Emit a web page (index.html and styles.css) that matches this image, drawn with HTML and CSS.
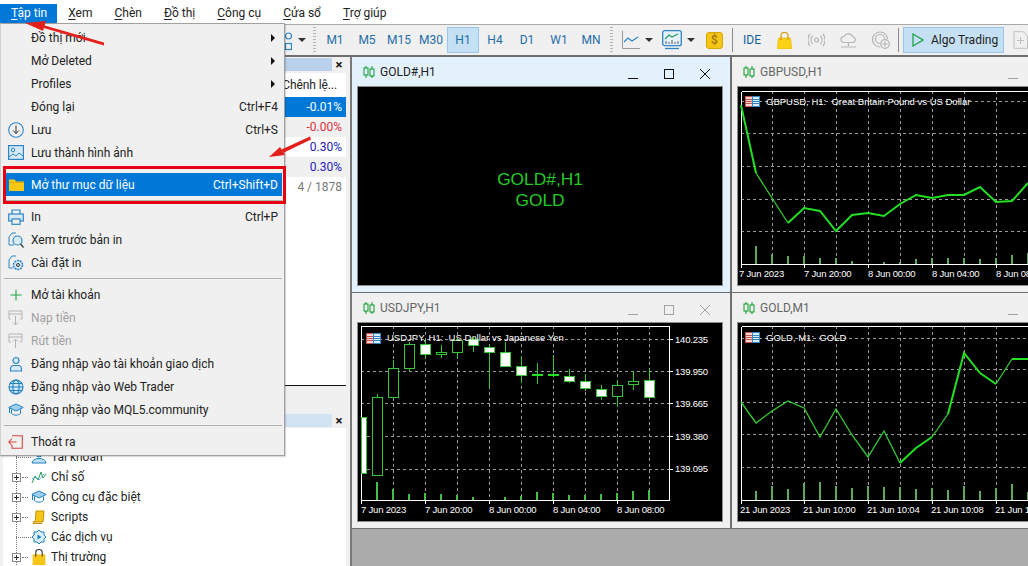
FILE: index.html
```html
<!DOCTYPE html>
<html lang="vi">
<head>
<meta charset="utf-8">
<title>MetaTrader 5</title>
<link rel="stylesheet" href="styles.css">
</head>
<body>
<svg class="defs" width="0" height="0" aria-hidden="true">
  <symbol id="candles" viewBox="0 0 12 12"><path d="M3 0v2M3 9v3M9 0v3M9 10v2" fill="none" stroke="#0a9a2a"/><rect x="1" y="2" width="4" height="7" fill="none" stroke="#0a9a2a"/><rect x="7" y="3" width="4" height="7" fill="none" stroke="#0a9a2a"/></symbol>
  <symbol id="flag" viewBox="0 0 15 11"><rect x=".5" y=".5" width="7" height="10" fill="#f7d9d6" stroke="#c9504a"/><rect x="7.5" y=".5" width="7" height="10" fill="#dcecf8" stroke="#2f85c4"/><path d="M1 3.500h6M1 5.500h6M1 7.500h6" stroke="#c9504a"/><path d="M8 3.500h6M8 5.500h6M8 7.500h6" stroke="#2f85c4"/></symbol>
  <symbol id="cap" viewBox="0 0 16 14"><path d="M.8 4.500 8 1l7.200 3.500L8 8z" fill="#9fd0ef" stroke="#1f7fbf"/><path d="M3.500 6.500v4c2.500 2.200 6.500 2.200 9 0v-4" fill="none" stroke="#1f7fbf"/><path d="M1.500 5v5" stroke="#1f7fbf"/></symbol>
</svg>
<div class="app">
  <nav class="menubar">
    <span class="mi mi-on"><u>T</u>ập tin</span>
    <span class="mi"><u>X</u>em</span>
    <span class="mi"><u>C</u>hèn</span>
    <span class="mi"><u>Đ</u>ồ thị</span>
    <span class="mi"><u>C</u>ông cụ</span>
    <span class="mi"><u>C</u>ửa sổ</span>
    <span class="mi"><u>T</u>rợ giúp</span>
  </nav>

  <div class="toolbar">
    <div class="tb-covered"></div>
    <svg class="tb-ico" width="11" height="24" viewBox="0 0 11 24"><circle cx="7.500" cy="8" r="3" fill="none" stroke="#2f85c4" stroke-width="1.200"/><rect x="4.500" y="15.500" width="6" height="6" fill="none" stroke="#2f85c4" stroke-width="1.200"/></svg>
    <span class="caret caret-shapes"></span>
    <span class="grip"></span>
    <span class="tf">M1</span><span class="tf">M5</span><span class="tf">M15</span><span class="tf">M30</span><span class="tf tf-on">H1</span><span class="tf">H4</span><span class="tf">D1</span><span class="tf">W1</span><span class="tf">MN</span>
    <span class="grip grip-b"></span>
    <svg class="tb-ico" width="18" height="18" viewBox="0 0 18 18"><path d="M.5 0v17.500H18" fill="none" stroke="#999"/><path d="M2 11l4-4 4 3 6-4" fill="none" stroke="#2f85c4" stroke-width="1.200"/></svg>
    <span class="caret"></span>
    <svg class="tb-ico tb-chart" width="20" height="20" viewBox="0 0 20 20"><rect x=".7" y=".7" width="18.600" height="15" rx="2" fill="#e6f2fb" stroke="#2f85c4" stroke-width="1.300"/><path d="M3 9l4-4 3 2 6-3" fill="none" stroke="#2a9d55" stroke-width="1.200"/><path d="M4 14v-3M7 14v-2M10 14v-4M13 14v-2M16 14v-3" stroke="#555"/><path d="M3 18.500h14" stroke="#2f85c4" stroke-width="1.300"/></svg>
    <span class="caret"></span>
    <span class="dollar">$</span>
    <span class="sep"></span>
    <span class="ide">IDE</span>
    <svg class="tb-ico tb-bag" width="15" height="17" viewBox="0 0 15 17"><path d="M1.500 6h12L15 17H0z" fill="#fcd116" stroke="#e5b300" stroke-width=".6"/><path d="M4 8V3.500C4 1.200 5.500.5 7.500.5S11 1.200 11 3.500V8" fill="none" stroke="#cf9c00" stroke-width="1.200"/></svg>
    <svg class="tb-ico tb-signal" width="17" height="14" viewBox="0 0 17 14"><g fill="none" stroke="#b5b5b5" stroke-width="1.200"><circle cx="8.500" cy="7" r="2"/><path d="M4.500 3a6 6 0 0 0 0 8M12.500 3a6 6 0 0 1 0 8M2 1a9.500 9.500 0 0 0 0 12M15 1a9.500 9.500 0 0 1 0 12"/></g></svg>
    <svg class="tb-ico tb-cloud" width="17" height="16" viewBox="0 0 17 16"><g fill="none" stroke="#b5b5b5" stroke-width="1.200"><path d="M4 10.500a3 3 0 0 1 0-6 5 5 0 0 1 9 .5 2.800 2.800 0 0 1 0 5.500z"/><path d="M8.500 10.500V14M1 15h15"/></g></svg>
    <svg class="tb-ico tb-globe" width="18" height="18" viewBox="0 0 18 18"><g fill="none" stroke="#b5b5b5" stroke-width="1.200"><path d="M8 16a7.500 7.500 0 1 1 7.500-8"/><path d="M8 12.500a4.500 4.500 0 1 1 4.500-5"/><circle cx="13" cy="13" r="4.300"/><path d="M13 10.500v5M10.500 13h5"/></g></svg>
    <span class="sep sep-algo"></span>
    <span class="algo"><svg width="12" height="14" viewBox="0 0 12 14"><path d="M1 1l10 6-10 6z" fill="none" stroke="#1fa34a" stroke-width="1.300"/></svg>Algo Trading</span>
    <svg class="tb-ico tb-new" width="15" height="18" viewBox="0 0 15 18"><path d="M1 .7h9l4.500 4V17.300H1z" fill="none" stroke="#c0c0c0"/><path d="M7.500 6v7M4 9.500h7" stroke="#c0c0c0"/></svg>
  </div>

  <div class="main">
    <aside class="side">
      <section class="watch">
        <header class="panel-head"><span class="panel-bar"></span><span class="panel-x">×</span></header>
        <div class="rows">
          <div class="row row-head">Chênh lệ...</div>
          <div class="row row-sel">-0.01%</div>
          <div class="row row-alt row-red">-0.00%</div>
          <div class="row row-blue">0.30%</div>
          <div class="row row-alt row-blue">0.30%</div>
          <div class="row row-count">4 / 1878</div>
        </div>
      </section>
      <section class="nav">
        <header class="panel-head"><span class="panel-bar panel-bar-light"></span><span class="panel-x">×</span></header>
        <ul class="tree">
          <li class="node"><span class="link"></span><svg class="node-ico" width="16" height="14" viewBox="0 0 16 14"><circle cx="8" cy="4" r="3" fill="#bfe0f5" stroke="#1f7fbf"/><path d="M1 13c0-6 14-6 14 0z" fill="#bfe0f5" stroke="#1f7fbf"/></svg><span>Tài khoản</span></li>
          <li class="node"><span class="exp"></span><span class="link link-s"></span><svg class="node-ico" width="16" height="14" viewBox="0 0 16 14"><path d="M1 13l3-7 3 4 3-8 2 6 3-4" fill="none" stroke="#2a9d55"/><path d="M1 9l4-2 3 3 6-7" fill="none" stroke="#4aa3dd" stroke-dasharray="2 1"/></svg><span>Chỉ số</span></li>
          <li class="node"><span class="exp"></span><span class="link link-s"></span><svg class="node-ico" width="16" height="14"><use href="#cap"/></svg><span>Công cụ đặc biệt</span></li>
          <li class="node"><span class="exp"></span><span class="link link-s"></span><svg class="node-ico" width="16" height="14" viewBox="0 0 16 14"><path d="M5 1h8l-1 11H2c1.500 0 2.500-1 2.500-3z" fill="#f5c518" stroke="#c48f00"/><path d="M2 13.500h9" stroke="#c48f00"/></svg><span>Scripts</span></li>
          <li class="node"><span class="link"></span><svg class="node-ico" width="16" height="16" viewBox="0 0 16 16"><path d="M8 1l2 2h3v3l2 2-2 2v3h-3l-2 2-2-2H3v-3L1 8l2-2V3h3z" fill="#d9edf9" stroke="#1f7fbf"/><path d="M6.500 5.500l4 2.500-4 2.500z" fill="#1f7fbf"/></svg><span>Các dịch vụ</span></li>
          <li class="node"><span class="exp"></span><span class="link link-s"></span><svg class="node-ico" width="16" height="16" viewBox="0 0 14 15"><path d="M1 5h12v10H1z" fill="#f5c518"/><path d="M4 7V3C4 1 5.500.5 7 .5S10 1 10 3v4" fill="none" stroke="#333"/></svg><span>Thị trường</span></li>
        </ul>
      </section>
    </aside>

    <section class="mdi">
      <article class="win win-active">
        <header class="win-title"><svg class="win-ico" width="12" height="12"><use href="#candles"/></svg><span class="win-name">GOLD#,H1</span>
          <span class="win-btns"><span class="btn btn-min"></span><span class="btn btn-max"></span><span class="btn btn-close"></span></span></header>
        <div class="chart chart-empty"><span>GOLD#,H1</span><span>GOLD</span></div>
      </article>

      <article class="win">
        <header class="win-title"><svg class="win-ico" width="12" height="12"><use href="#candles"/></svg><span class="win-name">GBPUSD,H1</span>
          <span class="win-btns"><span class="btn btn-min"></span><span class="btn btn-max"></span><span class="btn btn-close"></span></span></header>
        <div class="chart">
          <svg class="plot" width="364" height="198" viewBox="738 87 364 198">
            <g class="grid"><path d="M772.500 91V264M804.500 91V264M836.500 91V264M868.500 91V264M900.500 91V264M932.500 91V264M964.500 91V264M996.500 91V264M1028 91V264M741 101.500H1102M741 133.500H1102M741 166.500H1102M741 199.500H1102M741 231.500H1102"/></g>
            <path class="frame" d="M741.500 91.500H1102M741.500 91.500V264.500H1102M741.500 264V268M804.500 264V268M868.500 264V268M932.500 264V268M996.500 264V268"/>
            <path class="vol" d="M756 264V246M772 264V254M788 264V256M804 264V256M820 264V258M836 264V258M852 264V261M884 264V262M900 264V262M916 264V259M932 264V258M948 264V258M964 264V258M980 264V259M996 264V258M1012 264V255M1028 264V253"/>
            <polyline class="line" points="741,105 756,173"/>
            <polyline class="line line-thin" points="756,173 772,198 788,223"/>
            <polyline class="line" points="788,223 804,208 820,211 836,231 852,215 868,213 884,216 900,204 916,195 932,198 948,195 964,195 980,187 996,202 1012,201 1028,183"/>
            <use href="#flag" x="745" y="96" width="15" height="11"/>
            <text class="label label-legend" x="766" y="105">GBPUSD, H1:  Great Britain Pound vs US Dollar</text>
            <text class="label" x="739" y="277">7 Jun 2023</text><text class="label" x="804" y="277">7 Jun 20:00</text><text class="label" x="868" y="277">8 Jun 00:00</text><text class="label" x="932" y="277">8 Jun 04:00</text><text class="label" x="996" y="277">8 Jun 08:00</text>
          </svg>
        </div>
      </article>

      <article class="win">
        <header class="win-title"><svg class="win-ico" width="12" height="12"><use href="#candles"/></svg><span class="win-name">USDJPY,H1</span>
          <span class="win-btns"><span class="btn btn-min"></span><span class="btn btn-max"></span><span class="btn btn-close"></span></span></header>
        <div class="chart">
          <svg class="plot" width="364" height="198" viewBox="358 323 364 198">
            <g class="grid"><path d="M393.500 326V500M425.500 326V500M457.500 326V500M489.500 326V500M521.500 326V500M553.500 326V500M585.500 326V500M617.500 326V500M649.500 326V500M361 339.500H669M361 371.500H669M361 403.500H669M361 436.500H669M361 469.500H669"/></g>
            <path class="frame" d="M361.500 326.500H669.500V500.500H361.500ZM361.500 500V504M425.500 500V504M489.500 500V504M553.500 500V504M617.500 500V504M669 339.500H673M669 371.500H673M669 403.500H673M669 436.500H673M669 469.500H673"/>
            <path class="vol vol-bright" d="M377 500V482M393 500V489M409 500V494M425 500V493M441 500V494M457 500V495M473 500V497M505 500V497M521 500V496M537 500V492M553 500V493M569 500V495M585 500V495M601 500V494M617 500V493M633 500V491M649 500V490"/>
            <path class="wick" d="M377.500 394V397M393.500 360V368M409.500 342V372M425.500 340V359M441.500 345V358M457.500 338V359M473.500 337V352M489.500 345V388M505.500 342V367M521.500 356V383M537.500 363V384M553.500 355V377M569.500 369V383M585.500 374V391M601.500 385V400M617.500 380V407M633.500 371V390M649.500 369V398"/>
            <rect class="cw" x="361.500" y="417.500" width="5" height="56"/>
            <rect class="cb" x="372.500" y="397.500" width="10" height="78"/>
            <rect class="cb" x="388.500" y="368.500" width="10" height="29"/>
            <rect class="cb" x="404.500" y="344.500" width="10" height="24"/>
            <rect class="cw" x="420.500" y="344.500" width="10" height="10"/>
            <rect class="cb" x="436.500" y="352.500" width="10" height="2"/>
            <rect class="cb" x="452.500" y="340.500" width="10" height="12"/>
            <rect class="cw" x="468.500" y="339.500" width="10" height="6"/>
            <rect class="cw" x="484.500" y="347.500" width="10" height="5"/>
            <rect class="cw" x="500.500" y="352.500" width="10" height="14"/>
            <rect class="cw" x="516.500" y="366.500" width="10" height="9"/>
            <path class="doji" d="M532 375H543M548 375H559"/>
            <rect class="cw" x="564.500" y="376.500" width="10" height="5"/>
            <rect class="cw" x="580.500" y="381.500" width="10" height="7"/>
            <rect class="cw" x="596.500" y="389.500" width="10" height="7"/>
            <rect class="cb" x="612.500" y="385.500" width="10" height="11"/>
            <rect class="cb" x="628.500" y="381.500" width="10" height="3"/>
            <rect class="cw" x="644.500" y="380.500" width="10" height="17"/>
            <use href="#flag" x="366" y="333" width="15" height="11"/>
            <text class="label label-legend" x="387" y="341">USDJPY, H1:  US Dollar vs Japanese Yen</text>
            <text class="label" x="361" y="513">7 Jun 2023</text><text class="label" x="425" y="513">7 Jun 20:00</text><text class="label" x="489" y="513">8 Jun 00:00</text><text class="label" x="553" y="513">8 Jun 04:00</text><text class="label" x="617" y="513">8 Jun 08:00</text>
            <text class="label" x="675" y="343">140.235</text><text class="label" x="675" y="375">139.950</text><text class="label" x="675" y="407">139.665</text><text class="label" x="675" y="440">139.380</text><text class="label" x="675" y="472">139.095</text>
          </svg>
        </div>
      </article>

      <article class="win">
        <header class="win-title"><svg class="win-ico" width="12" height="12"><use href="#candles"/></svg><span class="win-name">GOLD,M1</span>
          <span class="win-btns"><span class="btn btn-min"></span><span class="btn btn-max"></span><span class="btn btn-close"></span></span></header>
        <div class="chart">
          <svg class="plot" width="364" height="198" viewBox="738 323 364 198">
            <g class="grid"><path d="M772.500 326V500M804.500 326V500M836.500 326V500M868.500 326V500M900.500 326V500M932.500 326V500M964.500 326V500M996.500 326V500M1028 326V500M741 338H1102M741 369.500H1102M741 402.500H1102M741 434.500H1102M741 467.500H1102"/></g>
            <path class="frame" d="M741.500 326.500H1102M741.500 326.500V500.500H1102M741.500 500V504M804.500 500V504M868.500 500V504M932.500 500V504M996.500 500V504"/>
            <path class="vol" d="M756 500V491M772 500V486M788 500V489M804 500V483M820 500V482M836 500V486M852 500V488M868 500V486M884 500V487M900 500V487M916 500V489M932 500V488M948 500V490M964 500V486M980 500V491M996 500V488M1012 500V484M1028 500V492"/>
            <polyline class="line line-thin" points="741,402 756,423 772,411 788,401 804,408 820,437 836,409 852,435 868,457 884,431 900,463"/>
            <polyline class="line" points="900,463 916,448 932,437"/>
            <polyline class="line line-thin" points="932,437 948,414"/>
            <polyline class="line" points="948,414 964,353 980,373 996,384"/>
            <polyline class="line line-thin" points="996,384 1012,359"/>
            <polyline class="line" points="1012,359 1028,359"/>
            <use href="#flag" x="745" y="332" width="15" height="11"/>
            <text class="label label-legend" x="766" y="341">GOLD, M1:  GOLD</text>
            <text class="label" x="740" y="513">21 Jun 2023</text><text class="label" x="803" y="513">21 Jun 10:00</text><text class="label" x="867" y="513">21 Jun 10:04</text><text class="label" x="931" y="513">21 Jun 10:08</text><text class="label" x="995" y="513">21 Jun 10:12</text>
          </svg>
        </div>
      </article>
    </section>
  </div>

  <div class="dropdown">
    <div class="item"><span class="ico"></span><span class="lbl">Đồ thị mới</span><span class="sub"></span></div>
    <div class="item"><span class="ico"></span><span class="lbl">Mở Deleted</span><span class="sub"></span></div>
    <div class="item"><span class="ico"></span><span class="lbl">Profiles</span><span class="sub"></span></div>
    <div class="item"><span class="ico"></span><span class="lbl">Đóng lại</span><span class="key">Ctrl+F4</span></div>
    <div class="item"><svg class="ico" width="16" height="16" viewBox="0 0 16 16"><circle cx="8" cy="8" r="7.300" fill="none" stroke="#2f85c4" stroke-width="1.100"/><path d="M8 3.500v8M5 8.500l3 3 3-3" fill="none" stroke="#333"/></svg><span class="lbl">Lưu</span><span class="key">Ctrl+S</span></div>
    <div class="item"><svg class="ico" width="16" height="15" viewBox="0 0 16 15"><rect x=".6" y=".6" width="14.800" height="13.800" fill="#d5e9f7" stroke="#2f85c4" stroke-width="1.200"/><circle cx="5" cy="5" r="1.800" fill="none" stroke="#2f85c4"/><path d="M1 12l4-3 3 2 3-3 4 3" fill="none" stroke="#2f85c4"/></svg><span class="lbl">Lưu thành hình ảnh</span></div>
    <div class="rule"></div>
    <div class="item item-sel"><svg class="ico" width="16" height="13" viewBox="0 0 16 13"><path d="M1 1.500h5.500l1.500 2h8V13H1z" fill="#f6c915"/><path d="M1 4.500h15" stroke="#e0a800"/></svg><span class="lbl">Mở thư mục dữ liệu</span><span class="key">Ctrl+Shift+D</span></div>
    <div class="rule"></div>
    <div class="item"><svg class="ico" width="16" height="16" viewBox="0 0 16 16"><g fill="none" stroke="#2f85c4" stroke-width="1.200"><path d="M4 5V1h8v4"/><rect x=".7" y="5" width="14.600" height="7" fill="#d5e9f7"/><rect x="4" y="10" width="8" height="5.300" fill="#f0f0f0"/></g></svg><span class="lbl">In</span><span class="key">Ctrl+P</span></div>
    <div class="item"><svg class="ico" width="16" height="16" viewBox="0 0 16 16"><path d="M6 13H1V5l3-4h4" fill="none" stroke="#2f85c4"/><circle cx="9.500" cy="8.500" r="4.500" fill="#d5e9f7" stroke="#2f85c4" stroke-width="1.200"/><path d="M12.500 12l3 3.500" stroke="#333" stroke-width="1.200"/></svg><span class="lbl">Xem trước bản in</span></div>
    <div class="item"><svg class="ico" width="16" height="16" viewBox="0 0 16 16"><path d="M5 13H1V5l3-4h4" fill="none" stroke="#2f85c4"/><circle cx="10" cy="10" r="4.500" fill="#d5e9f7" stroke="#2f85c4" stroke-width="1.500" stroke-dasharray="2 .8"/><circle cx="10" cy="10" r="1.500" fill="none" stroke="#333"/></svg><span class="lbl">Cài đặt in</span></div>
    <div class="rule"></div>
    <div class="item"><svg class="ico" width="16" height="16" viewBox="0 0 16 16"><path d="M8 2.500v11M2.500 8h11" stroke="#1fa34a" stroke-width="1.100"/></svg><span class="lbl">Mở tài khoản</span></div>
    <div class="item item-off"><svg class="ico" width="16" height="16" viewBox="0 0 16 16"><path d="M3 9H1V1h13v8h-2M1 4h13M7.500 6v9M5 12.500l2.500 2.500 2.500-2.500" fill="none" stroke="#b5b5b5"/></svg><span class="lbl">Nạp tiền</span></div>
    <div class="item item-off"><svg class="ico" width="16" height="16" viewBox="0 0 16 16"><path d="M3 9H1V1h13v8h-2M1 4h13M7.500 15V6M5 8.500L7.500 6 10 8.500" fill="none" stroke="#b5b5b5"/></svg><span class="lbl">Rút tiền</span></div>
    <div class="item"><svg class="ico" width="16" height="16" viewBox="0 0 16 16"><circle cx="8" cy="4.500" r="3" fill="#d5e9f7" stroke="#2f85c4" stroke-width="1.200"/><path d="M2.500 15v-2c0-2.500 2-3.500 3-3.500h5c1 0 3 1 3 3.500v2z" fill="#d5e9f7" stroke="#2f85c4" stroke-width="1.200"/></svg><span class="lbl">Đăng nhập vào tài khoản giao dịch</span></div>
    <div class="item"><svg class="ico" width="16" height="16" viewBox="0 0 16 16"><g fill="none" stroke="#1f7fbf" stroke-width="1.100"><circle cx="8" cy="8" r="7" fill="#d5e9f7"/><ellipse cx="8" cy="8" rx="3.200" ry="7"/><path d="M1 8h14M2 4.500h12M2 11.500h12"/></g></svg><span class="lbl">Đăng nhập vào Web Trader</span></div>
    <div class="item"><svg class="ico" width="16" height="14"><use href="#cap"/></svg><span class="lbl">Đăng nhập vào MQL5.community</span></div>
    <div class="rule"></div>
    <div class="item"><svg class="ico" width="16" height="14" viewBox="0 0 16 14"><path d="M4 .7h10.300v12.600H4V10M8.500 7H.8M4 3.500L.8 7 4 10.500" fill="none" stroke="#d2473f" stroke-width="1.100"/></svg><span class="lbl">Thoát ra</span></div>
  </div>

  <div class="callout"></div>
  <svg class="arrows" width="320" height="170" viewBox="0 0 320 170" aria-hidden="true">
    <path d="M104 45.500 42 27.500l1-2.500 61 17.500z"/><path d="M25 23 46 21l-3 10z"/>
    <path d="M311 139.500 283 153l-1.500-3.500L310 136.500z"/><path d="M269 157l11-10 5 8z"/>
  </svg>
</div>
</body>
</html>
```

FILE: styles.css
```css
* { box-sizing: border-box; }
html, body { margin: 0; padding: 0; }
body { font-family: Roboto, "Noto Sans", sans-serif; font-size: 12px; color: #222; background: #fff; }
.defs { position: absolute; }
.app { position: relative; width: 1028px; height: 566px; overflow: hidden; display: flex; flex-direction: column; }

/* menu bar */
.menubar { height: 24px; padding-top: 4px; display: flex; background: #fff; flex: none; }
.mi { height: 19px; line-height: 19px; padding: 0 11px; white-space: nowrap; }
.mi-on { background: #0078d7; color: #fff; padding: 0 10px 0 11px; }
.mi u { text-underline-offset: 2px; }

/* toolbar */
.toolbar { height: 31px; flex: none; display: flex; align-items: center; background: #f0f0f0; border-top: 1px solid #a9a9a9; }
.tb-covered { width: 281px; flex: none; }
.tb-ico { flex: none; display: block; }
.caret { width: 0; height: 0; flex: none; border-left: 4px solid transparent; border-right: 4px solid transparent; border-top: 4px solid #333; margin-left: 5px; }
.caret-shapes { margin-left: 6px; }
.grip { width: 3px; height: 26px; flex: none; margin: 0 3px 0 7px; background: repeating-linear-gradient(#b4b4b4 0 1px, transparent 1px 3px); }
.grip-b { margin: 0 9px 0 3px; }
.tf { width: 32px; height: 26px; flex: none; display: flex; align-items: center; justify-content: center; color: #1f6ea8; font-size: 12px; border: 1px solid transparent; }
.tf-on { background: #c5dff3; border-color: #99c6ea; }
.tb-chart { margin-left: 9px; }
.dollar { width: 17px; height: 17px; margin-left: 11px; flex: none; background: #f5c518; border: 1px solid #d9a800; border-radius: 3px; color: #a97b00; font-weight: 700; font-size: 12px; line-height: 15px; text-align: center; }
.sep { width: 1px; height: 24px; margin-left: 9px; flex: none; background: #8a8a8a; }
.ide { margin-left: 10px; width: 18px; flex: none; color: #1160a0; font-size: 12px; }
.tb-bag { margin-left: 16px; }
.tb-signal { margin-left: 16px; }
.tb-cloud { margin-left: 15px; }
.tb-globe { margin-left: 15px; }
.sep-algo { margin-left: 8px; }
.algo { margin-left: 4px; width: 101px; height: 26px; flex: none; display: flex; align-items: center; gap: 7px; padding-left: 8px; background: #c5dff3; border: 1px solid #99c6ea; color: #222; font-size: 12px; white-space: nowrap; }
.tb-new { margin-left: 9px; }

/* body */
.main { flex: 1; min-height: 0; display: flex; border-top: 2px solid #6f6f6f; background: #f0f0f0; }
.side { width: 350px; flex: none; display: flex; flex-direction: column; padding-right: 4px; }
.watch { height: 329px; flex: none; display: flex; flex-direction: column; }
.panel-head { height: 13px; flex: none; margin-top: 1px; display: flex; align-items: center; }
.panel-bar { width: 332px; height: 13px; background: #b9d1ea; }
.panel-bar-light { background: #d2e3f3; }
.panel-x { width: 14px; text-align: center; font-size: 13px; font-weight: 700; line-height: 13px; color: #111; }
.rows { flex: 1; background: #fff; border-bottom: 1px solid #111; margin-top: 2px; }
.row { height: 20px; line-height: 20px; padding-right: 4px; text-align: right; }
.row-head { height: 24px; line-height: 24px; padding-right: 9px; letter-spacing: -.1px; }
.row-sel { background: #0078d7; color: #fff; }
.row-alt { background: #f0f0f0; }
.row-red { color: #d8323a; }
.row-blue { color: #1c1cb8; }
.row-count { color: #777; }
.nav { flex: 1; display: flex; flex-direction: column; padding-top: 27px; }
.tree { flex: 1; list-style: none; margin: 1px 0 0 3px; padding: 19px 0 0 9px; background: repeating-linear-gradient(#777 0 1px, transparent 1px 2px) 13px 0 / 1px 100% no-repeat, #fff; }
.node { height: 20px; display: flex; align-items: center; white-space: nowrap; }
.exp { width: 9px; height: 9px; flex: none; border: 1px solid #8a8a8a; background: linear-gradient(#333,#333) center/5px 1px no-repeat, linear-gradient(#333,#333) center/1px 5px no-repeat, #fff; }
.link { width: 15px; flex: none; border-top: 1px dotted #777; margin-left: 4px; }
.link-s { width: 6px; margin-left: 1px; margin-right: 3px; }
.node-ico { flex: none; margin-right: 4px; }

/* MDI */
.mdi { flex: 1; min-width: 0; overflow: hidden; display: grid; grid-template-columns: 380px 380px; grid-template-rows: 236px 236px; align-content: start; background: #ababab; border-left: 2px solid #7a7a7a; }
.win { display: flex; flex-direction: column; background: #f0f0f0; border-right: 2px solid #6f6f6f; border-bottom: 1px solid #6f6f6f; padding: 0 8px 7px 6px; color: #666; }
.win-active { background: #e3f1fc; color: #222; }
.win-title { height: 30px; flex: none; display: flex; align-items: center; padding-left: 5px; padding-bottom: 1px; }
.win-ico { flex: none; margin-right: 5px; }
.win-name { font-size: 12px; }
.win-btns { margin-left: auto; display: flex; gap: 26px; padding: 4px 12px 0 0; }
.btn { width: 10px; height: 10px; flex: none; display: block; opacity: .35; }
.win-active .btn { opacity: 1; }
.btn-min { border-bottom: 1px solid #111; }
.btn-max { border: 1px solid #111; }
.btn-close { background: linear-gradient(45deg, transparent 46%, #111 46% 54%, transparent 54%), linear-gradient(-45deg, transparent 46%, #111 46% 54%, transparent 54%); }
.chart { flex: 1; min-height: 0; background: #000; box-shadow: 0 0 0 1px #8c8c8c; overflow: hidden; }
.plot { display: block; }
.chart-empty { display: flex; flex-direction: column; align-items: center; justify-content: center; font-family: "Liberation Sans", sans-serif; font-size: 17.330px; line-height: 21px; color: #22cc22; padding-top: 8px; }

/* chart svg */
.grid path { fill: none; stroke: #9a9a9a; stroke-width: 1; stroke-dasharray: 3 3; shape-rendering: crispEdges; }
.frame { fill: none; stroke: #fff; stroke-width: 1; shape-rendering: crispEdges; }
.vol { fill: none; stroke: #5fa85f; stroke-width: 2; shape-rendering: crispEdges; }
.vol-bright { stroke: #44c044; }
.line { fill: none; stroke: #22e022; stroke-width: 2; }
.line-thin { stroke: #33cc33; stroke-width: 1.300; }
.wick { fill: none; stroke: #33c833; stroke-width: 1; shape-rendering: crispEdges; }
.doji { fill: none; stroke: #22e022; stroke-width: 2; shape-rendering: crispEdges; }
.cw { fill: #fff; stroke: #33c833; shape-rendering: crispEdges; }
.cb { fill: #000; stroke: #33c833; shape-rendering: crispEdges; }
.label { fill: #fff; font-family: "Liberation Sans", sans-serif; font-size: 9.500px; letter-spacing: -.2px; white-space: pre; }
.label-legend { letter-spacing: 0; }

/* dropdown */
.dropdown { position: absolute; left: 0; top: 23px; width: 285px; height: 433px; padding: 2px 2px 3px 0; background: #f0f0f0; border: 1px solid #a0a0a0; border-left-color: #d0d0d0; box-shadow: 1px 1px 1px rgba(0,0,0,.15); }
.item { height: 23px; margin-left: 5px; display: flex; align-items: center; padding: 0 4px 0 2px; white-space: nowrap; }
.ico { width: 16px; flex: none; margin-right: 7px; display: block; }
.lbl { flex: 1; }
.key { flex: none; }
.sub { flex: none; width: 0; height: 0; margin-right: 3px; border-top: 4px solid transparent; border-bottom: 4px solid transparent; border-left: 4px solid #111; }
.item-sel { background: #0078d7; color: #fff; }
.item-off { color: #a0a0a0; }
.rule { height: 9px; margin: 0 0 0 3px; display: flex; align-items: center; }
.rule::before { content: ""; flex: 1; height: 1px; background: #b0b0b0; }

/* annotations */
.callout { position: absolute; left: 3px; top: 166px; width: 283px; height: 38px; border: 3px solid #e60012; }
.arrows { position: absolute; left: 0; top: 0; fill: #e3201b; pointer-events: none; }
```
